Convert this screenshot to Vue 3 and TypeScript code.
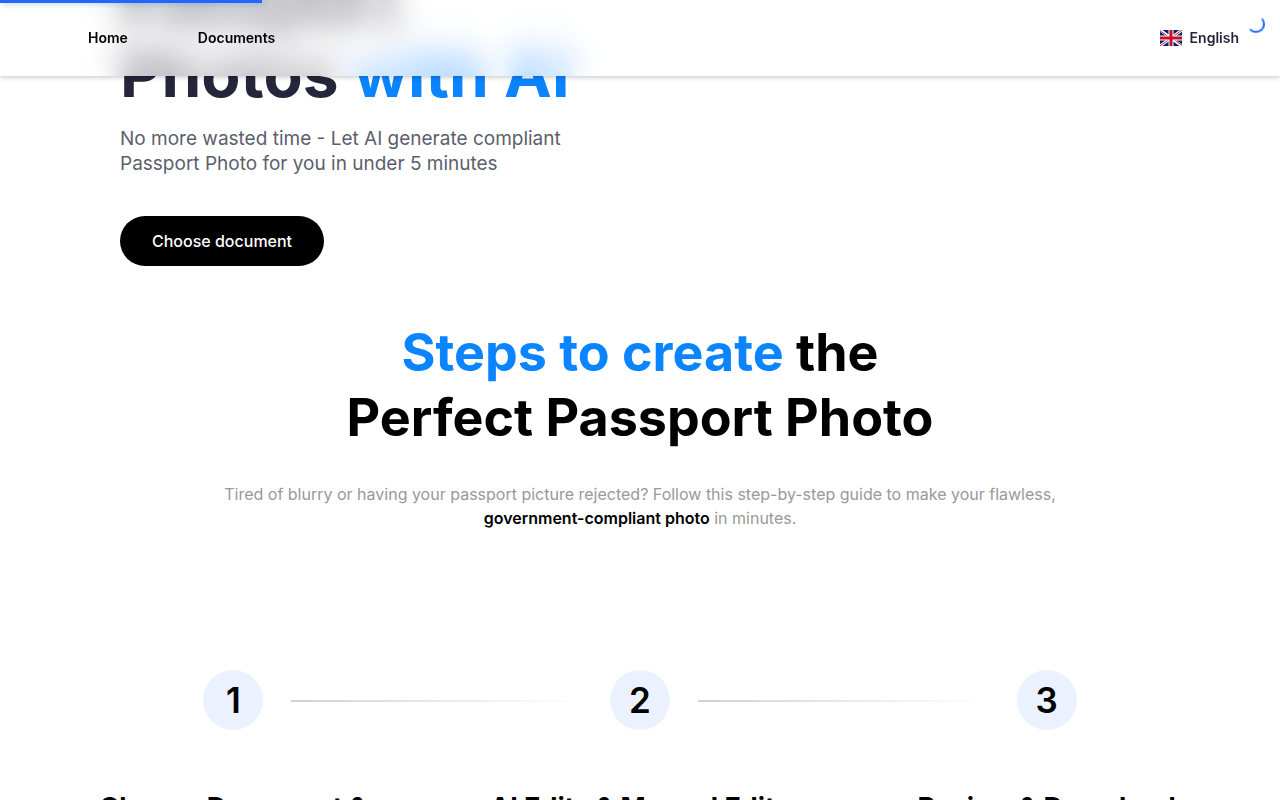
<script setup lang="ts">
import { ref } from 'vue'

interface Step {
  id: number
  title: string
}

const loadProgress = ref<number>(20.5)

const steps: Step[] = [
  { id: 1, title: 'Choose Document & Upload Photo' },
  { id: 2, title: 'AI Edits & Manual Edits' },
  { id: 3, title: 'Review & Download' },
]
</script>

<template>
  <div class="page">
    <div class="progress" aria-hidden="true">
      <div class="progress-bar" :style="{ width: `${loadProgress}%` }"></div>
    </div>
    <div class="spinner" role="status" aria-label="Loading"></div>

    <header class="header">
      <div v-for="layer in 6" :key="layer" class="frost" aria-hidden="true"></div>
      <nav class="nav">
        <a class="nav-link" href="#">Home</a>
        <a class="nav-link" href="#documents">Documents</a>
      </nav>
      <button class="language" type="button">
        <svg class="flag" viewBox="0 0 22 16" aria-hidden="true">
          <rect width="22" height="16" fill="#012169" />
          <path d="M0 0L22 16M22 0L0 16" stroke="#fff" stroke-width="3" />
          <path d="M0 .7L10 8M22 0L12 7.3M22 15.3L12 8M0 16L10 8.7" stroke="#c8102e" stroke-width="1" />
          <path d="M11 0V16M0 8H22" stroke="#fff" stroke-width="5" />
          <path d="M11 0V16M0 8H22" stroke="#c8102e" stroke-width="3" />
        </svg>
        <span>English</span>
      </button>
    </header>

    <main>
      <section class="hero">
        <h1 class="hero-title">Passport<br />Photos <span class="accent">with AI</span></h1>
        <p class="hero-text">
          No more wasted time - Let AI generate compliant Passport Photo for you in under 5 minutes
        </p>
        <button class="cta" type="button">Choose document</button>
      </section>

      <section class="guide">
        <h2 class="guide-title"><span class="accent">Steps to create</span> the<br />Perfect Passport Photo</h2>
        <p class="guide-text">
          Tired of blurry or having your passport picture rejected? Follow this step-by-step guide to make your
          flawless, <strong>government-compliant photo</strong> in minutes.
        </p>
        <ol class="steps">
          <li v-for="(step, index) in steps" :key="step.id" class="step">
            <div class="step-marker">
              <span class="step-number">{{ step.id }}</span>
              <span v-if="index < steps.length - 1" class="step-line"></span>
            </div>
            <h3 class="step-title">{{ step.title }}</h3>
          </li>
        </ol>
      </section>
    </main>
  </div>
</template>

<style>
body {
  margin: 0;
  background: #fff;
}
</style>

<style scoped>
.page {
  display: flow-root;
  background: #fff;
  font-family: Inter, 'Liberation Sans', sans-serif;
  color: #000;
}

.progress {
  position: fixed;
  inset: 0 0 auto;
  z-index: 3;
}

.progress-bar {
  height: 3px;
  background: #2169f5;
  box-shadow: 2px 0 6px rgba(33, 105, 245, 0.5);
}

.spinner {
  position: fixed;
  top: 15px;
  right: 15px;
  z-index: 3;
  box-sizing: border-box;
  width: 18px;
  height: 18px;
  border: 2px solid transparent;
  border-top-color: #2169f5;
  border-left-color: #2169f5;
  border-radius: 50%;
  transform: rotate(184deg);
}

.header {
  position: fixed;
  inset: 0 0 auto;
  z-index: 2;
  display: flex;
  align-items: center;
  justify-content: space-between;
  box-sizing: border-box;
  height: 76px;
  padding: 0 41px 0 88px;
  box-shadow: 0 2px 4px rgba(0, 0, 0, 0.18);
}

.frost {
  position: absolute;
  inset: -40px 0;
  z-index: -1;
  background: rgba(255, 255, 255, 0.11);
  backdrop-filter: blur(7px);
  clip-path: inset(40px 0);
}

.nav {
  display: flex;
  gap: 70px;
}

.nav-link {
  color: #000;
  font-size: 14px;
  font-weight: 600;
  line-height: 20px;
  text-decoration: none;
}

.language {
  display: flex;
  align-items: center;
  gap: 8px;
  padding: 0;
  border: 0;
  background: none;
  color: #25253b;
  font: 600 14px/20px Inter, 'Liberation Sans', sans-serif;
}

.flag {
  width: 22px;
  height: 16px;
}

.accent {
  color: #0a84ff;
}

.hero {
  margin-top: -31px;
  padding: 0 120px;
}

.hero-title {
  margin: 0;
  color: #25253b;
  font-size: 64px;
  font-weight: 700;
  line-height: 70px;
}

.hero-text {
  max-width: 460px;
  margin: 17px 0 0;
  color: #5b5f6b;
  font-size: 19px;
  line-height: 25px;
}

.cta {
  margin-top: 40px;
  padding: 13px 32px;
  border: 0;
  border-radius: 25px;
  background: #000;
  color: #fff;
  font: 500 16px/24px Inter, 'Liberation Sans', sans-serif;
}

.guide {
  padding: 54px 80px 80px;
  text-align: center;
}

.guide-title {
  margin: 0;
  font-size: 52px;
  font-weight: 700;
  line-height: 65px;
}

.guide-text {
  max-width: 880px;
  margin: 32px auto 0;
  color: #999;
  font-size: 16px;
  line-height: 24px;
}

.guide-text strong {
  color: #000;
  font-weight: 600;
}

.steps {
  --step-gap: 100px;
  display: grid;
  grid-template-columns: repeat(3, minmax(0, 1fr));
  gap: var(--step-gap);
  margin: 140px 0 0;
  padding: 0;
  list-style: none;
}

.step-marker {
  display: grid;
  grid-template-columns: minmax(0, 1fr) 60px minmax(0, 1fr);
}

.step-number {
  grid-column: 2;
  border-radius: 50%;
  background: #ebf1fe;
  font-size: 35px;
  font-weight: 600;
  line-height: 60px;
}

.step-line {
  width: calc(200% + var(--step-gap) - 56px);
  height: 2px;
  margin: 30px 0 0 28px;
  background: linear-gradient(90deg, #d2d2d2, transparent);
}

.step-title {
  margin: 60px 0 0;
  font-size: 27px;
  font-weight: 700;
  line-height: 36px;
}
</style>
